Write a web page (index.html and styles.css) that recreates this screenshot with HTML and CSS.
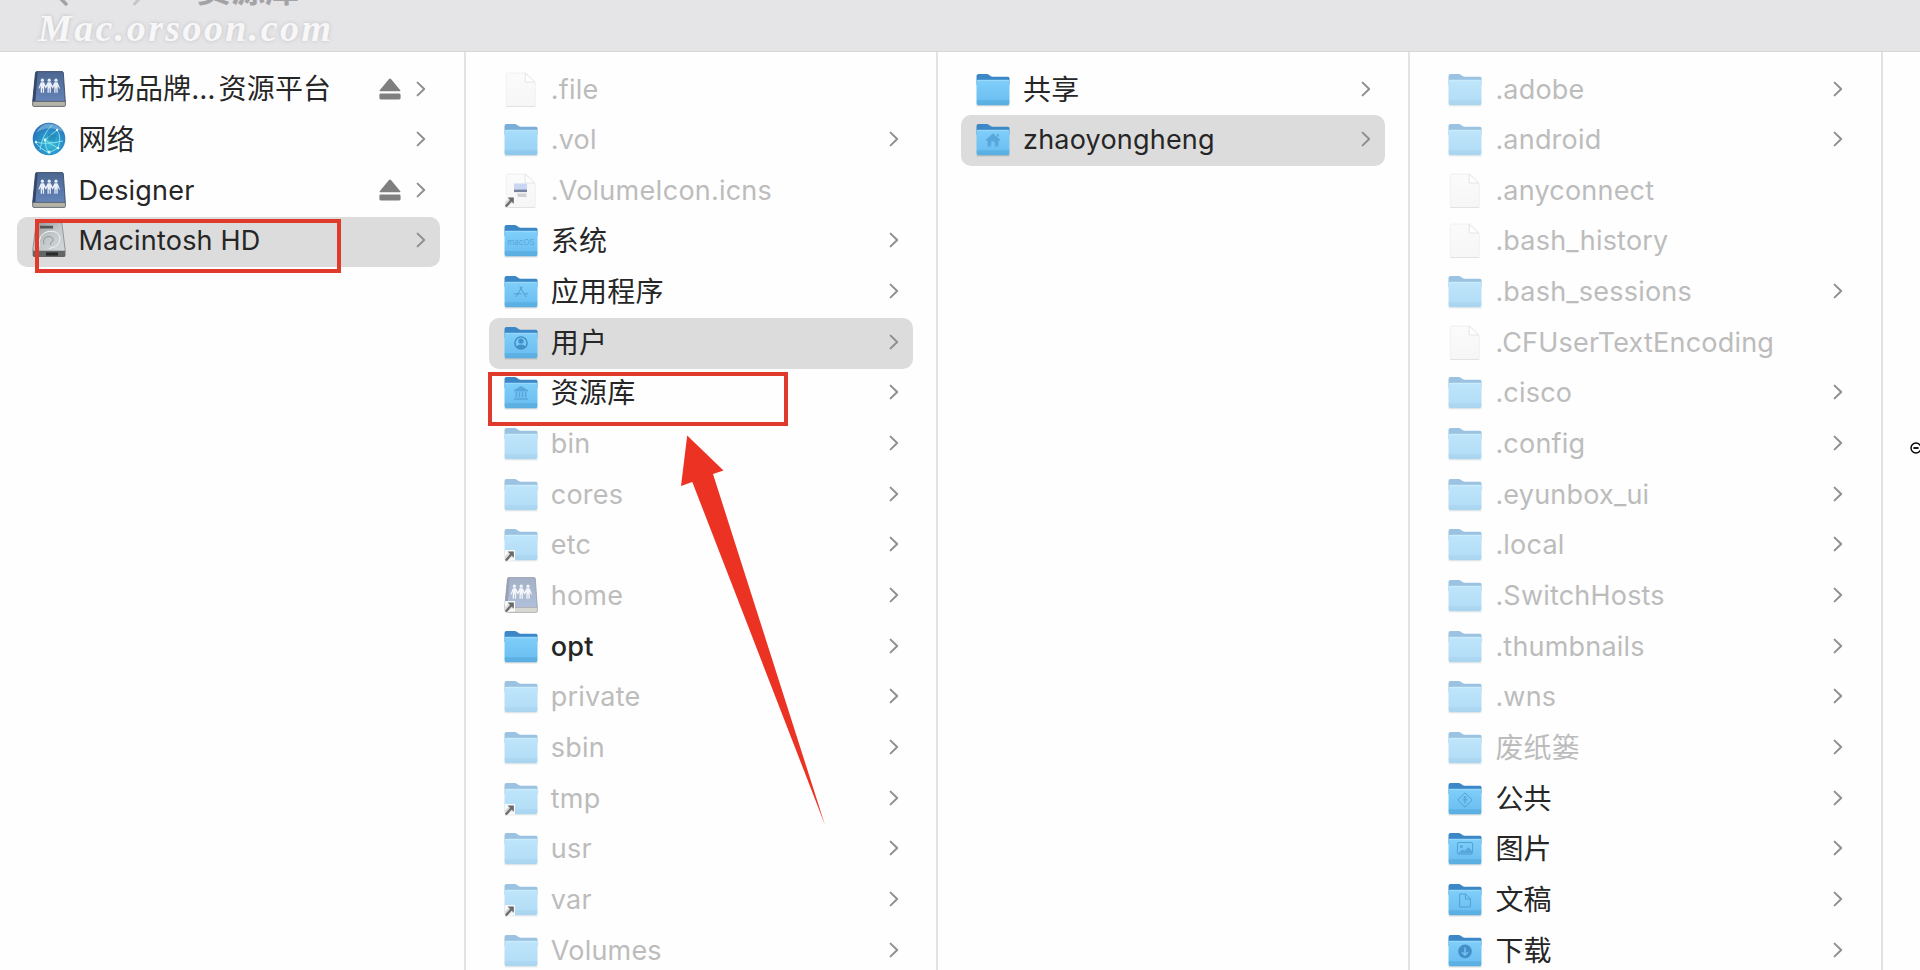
FILE: index.html
```html
<!DOCTYPE html>
<html lang="zh-CN">
<head>
    <meta charset="UTF-8">
    <title>Macintosh HD</title>
    <link rel="stylesheet" href="styles.css">
</head>
<body>
    <!-- Icon definitions -->
    <svg class="sprite" aria-hidden="true">
        <defs>
            <linearGradient id="folderFront" x1="0" y1="0" x2="0" y2="1">
                <stop offset="0" stop-color="#80cffa"/>
                <stop offset="0.78" stop-color="#6dc0f2"/>
                <stop offset="0.82" stop-color="#5db2e6"/>
                <stop offset="1" stop-color="#5aaddf"/>
            </linearGradient>
            <linearGradient id="serverFront" x1="0" y1="0" x2="0" y2="1">
                <stop offset="0" stop-color="#4c6690"/>
                <stop offset="1" stop-color="#6484b8"/>
            </linearGradient>
            <radialGradient id="globeFill" cx="0.55" cy="0.65" r="0.65">
                <stop offset="0" stop-color="#3cc0d8"/>
                <stop offset="0.5" stop-color="#2a95cc"/>
                <stop offset="1" stop-color="#2b6cb5"/>
            </radialGradient>
            <linearGradient id="diskFill" x1="0" y1="0" x2="1" y2="1">
                <stop offset="0" stop-color="#8f9494"/>
                <stop offset="0.5" stop-color="#c3c9cb"/>
                <stop offset="1" stop-color="#d3d8da"/>
            </linearGradient>
            <linearGradient id="pageFill" x1="0" y1="0" x2="0" y2="1">
                <stop offset="0" stop-color="#fbfbfb"/>
                <stop offset="1" stop-color="#f6f6f6"/>
            </linearGradient>
        </defs>
        <symbol id="folder" viewBox="0 0 34 36">
            <path d="M0.5 34.6h33" stroke="#000" stroke-opacity="0.13" stroke-width="2"/>
            <path d="M0.5 5a2 2 0 0 1 2-2H11c2 0 3 2.7 5.5 2.7H32A1.5 1.5 0 0 1 33.5 7.2V14H0.5z" fill="#3c88c6"/>
            <path d="M0.5 10.3a1.6 1.6 0 0 1 1.6-1.6h29.8a1.6 1.6 0 0 1 1.6 1.6V32.2a2 2 0 0 1-2 2h-29a2 2 0 0 1-2-2z" fill="url(#folderFront)"/>
            <path d="M1.2 9.6h31.6" stroke="#9bdafb" stroke-width="1"/>
        </symbol>
        <symbol id="file" viewBox="0 0 34 36">
            <path d="M2.4 3a1 1 0 0 1 1-1H21.5L31.3 11.5V34.5a1 1 0 0 1-1 1H3.4a1 1 0 0 1-1-1z" fill="url(#pageFill)" stroke="#efefef" stroke-width="0.8"/>
            <path d="M2.5 35.6h28.7" stroke="#dedede" stroke-width="0.9"/>
            <path d="M21.2 2.2V11h9.8z" fill="#fff" stroke="#e2e2e2" stroke-width="0.9"/>
        </symbol>
        <symbol id="server" viewBox="0 0 34 36">
            <path d="M3.5 1.6A1.2 1.2 0 0 1 4.7 0.6H30a1.3 1.3 0 0 1 1.3 1.1L33.3 30.6H0.7z" fill="url(#serverFront)" stroke="#38496a" stroke-width="0.9"/>
            <path d="M3.6 1.4L5.6 1L3.4 30H0.7z" fill="#34466a"/>
            <path d="M0.7 30.4h32.7v4a1 1 0 0 1-1 1H1.7a1 1 0 0 1-1-1z" fill="#b4b4a8" stroke="#5c626c" stroke-width="0.9"/>
            <g fill="#e9eef8">
                <circle cx="10.4" cy="9.2" r="1.6"/>
                <circle cx="17.2" cy="9.2" r="1.6"/>
                <circle cx="24" cy="9.2" r="1.6"/>
                <path d="M8.8 11.2h3.2L13.8 15 15.6 11.2h3.2L20.6 15 22.4 11.2h3.2L28 17.3 27.2 17.8 25.7 15V21.8H24.4V17.6H23.6V21.8H22.3V15L20.6 17.8 18.9 15V21.8H17.6V17.6H16.8V21.8H15.5V15L13.8 17.8 12.1 15V21.8H10.8V17.6H10V21.8H8.7V15L7.2 17.8 6.4 17.3z"/>
            </g>
        </symbol>
        <symbol id="globe" viewBox="0 0 34 36">
            <circle cx="17" cy="18" r="16.3" fill="url(#globeFill)"/>
            <path d="M4 12Q9 2 18 2.4Q27 3 31 11Q16 3 4 12z" fill="#c2eefa" opacity="0.4"/>
            <path d="M3 21Q14 24 31 20M8 29Q10 14 20 4M13 19L25 9M13 19Q20 24 26 27M25 9Q30 16 26 27M13 19Q13 27 17 32M26 27L17 32M3 21Q8 28 17 32" fill="none" stroke="#9af0f0" stroke-width="1" opacity="0.8"/>
            <path d="M16 13L24 14L23 21L16 19z" fill="#145d8d" opacity="0.3"/>
            <g fill="#d8fdff">
                <circle cx="13" cy="19" r="1.4"/>
                <circle cx="25" cy="9" r="1.2"/>
                <circle cx="17" cy="31" r="1.5"/>
                <circle cx="26" cy="27" r="1.3"/>
                <circle cx="4" cy="21" r="1.2"/>
            </g>
        </symbol>
        <symbol id="disk" viewBox="0 0 34 36">
            <path d="M4 2a1.5 1.5 0 0 1 1.5-1.4h23A1.5 1.5 0 0 1 30 2L33.3 29H0.7z" fill="url(#diskFill)" stroke="#818687" stroke-width="0.8"/>
            <path d="M8 3.8h13v2.6H7.8z" fill="#555"/>
            <path d="M7 25Q6 12 16 9.5Q27 8 28 16Q28 25 17 26.5" fill="none" stroke="#eff3f4" stroke-width="1"/>
            <path d="M12 22.5Q10 15 17 14.5Q22 15 21 19Q18 20 18.5 23" fill="none" stroke="#92999b" stroke-width="1"/>
            <path d="M0.7 29h32.7v4.6a1.4 1.4 0 0 1-1.4 1.4H2.1a1.4 1.4 0 0 1-1.4-1.4z" fill="#626566"/>
            <path d="M14 30.4h12v3.2H14z" fill="#2a2a2a"/>
        </symbol>
        <symbol id="alias" viewBox="0 0 34 36">
            <path d="M1.2 24H11V34.6H6L0 37z" fill="#fafafa"/>
            <path d="M1 35.6L1 30.5L6 25.4H9.8V32.6L8 31L2.6 35.4z" fill="#b9b9b9" opacity="0.5"/>
            <path d="M1.8 34.4L7.6 28" fill="none" stroke="#6a6a6a" stroke-width="2.2"/>
            <path d="M3.6 25.4H9.8V31.8z" fill="#6a6a6a"/>
        </symbol>
        <symbol id="chevron" viewBox="0 0 10 16">
            <path d="M1.6 1.6L8.2 8L1.6 14.4" fill="none" stroke="#8f8f8f" stroke-width="2" stroke-linecap="round" stroke-linejoin="round"/>
        </symbol>
        <symbol id="eject" viewBox="0 0 22 22">
            <path d="M10 1.1a1.3 1.3 0 0 1 2 0L21.3 12.2a0.6 0.6 0 0 1-0.5 1H1.2a0.6 0.6 0 0 1-0.5-1z" fill="#7f7f7f"/>
            <rect x="0.4" y="15.6" width="21.2" height="5.8" rx="1.3" fill="#7f7f7f"/>
        </symbol>
    </svg>

    <header class="toolbar">
        <svg class="toolbar-arrows" viewBox="0 0 94 8">
            <path d="M8 -4L16 4" stroke="#a2a2a5" stroke-width="3.4" stroke-linecap="round"/>
            <path d="M92 -4L84.5 4" stroke="#c6c6c9" stroke-width="3" stroke-linecap="round"/>
        </svg>
        <div class="toolbar-title">资源库</div>
        <div class="watermark">Mac.orsoon.com</div>
    </header>

    <main class="columns">
        <ul class="column">
            <li class="row zh"><svg class="icon"><use href="#server"/></svg><span class="name">市场品牌<span class="dots">…</span>资源平台</span><svg class="eject"><use href="#eject"/></svg><svg class="chevron"><use href="#chevron"/></svg></li>
            <li class="row zh"><svg class="icon"><use href="#globe"/></svg><span class="name">网络</span><svg class="chevron"><use href="#chevron"/></svg></li>
            <li class="row"><svg class="icon"><use href="#server"/></svg><span class="name">Designer</span><svg class="eject"><use href="#eject"/></svg><svg class="chevron"><use href="#chevron"/></svg></li>
            <li class="row selected"><svg class="icon"><use href="#disk"/></svg><span class="name">Macintosh HD</span><svg class="chevron"><use href="#chevron"/></svg></li>
        </ul>

        <ul class="column">
            <li class="row hidden-item"><svg class="icon page"><use href="#file"/></svg><span class="name">.file</span></li>
            <li class="row hidden-item"><svg class="icon strong"><use href="#folder"/></svg><span class="name">.vol</span><svg class="chevron"><use href="#chevron"/></svg></li>
            <li class="row hidden-item">
                <svg class="icon page" viewBox="0 0 34 36">
                    <use href="#file"/>
                    <path d="M10 11.5h13v6H10z" fill="#c9d7f5"/>
                    <path d="M10 17.5h13v2.6H10z" fill="#7483a0"/>
                    <path d="M13 21.5h9.5v3.5H14z" fill="#d0d0d3"/>
                    <use href="#alias"/>
                </svg>
                <span class="name">.VolumeIcon.icns</span>
            </li>
            <li class="row zh">
                <svg class="icon" viewBox="0 0 34 36"><use href="#folder"/><text class="folder-text" x="17" y="23">macOS</text></svg>
                <span class="name">系统</span><svg class="chevron"><use href="#chevron"/></svg>
            </li>
            <li class="row zh">
                <svg class="icon" viewBox="0 0 34 36"><use href="#folder"/><path class="glyph" d="M18.2 13.5L12 24M15.8 13.5L22 24M10 20.8h7.5M20.5 20.8h3.5"/></svg>
                <span class="name">应用程序</span><svg class="chevron"><use href="#chevron"/></svg>
            </li>
            <li class="row zh selected">
                <svg class="icon" viewBox="0 0 34 36"><use href="#folder"/><circle class="glyph bold" cx="17" cy="19" r="6.1"/><circle class="glyph-fill dark" cx="17" cy="17" r="2.6"/><path class="glyph-fill dark" d="M12.3 22.8Q17 18 21.7 22.8Q17 27.5 12.3 22.8z"/></svg>
                <span class="name">用户</span><svg class="chevron"><use href="#chevron"/></svg>
            </li>
            <li class="row zh">
                <svg class="icon" viewBox="0 0 34 36"><use href="#folder"/><path class="glyph-fill" d="M17 12L24 16.2V17.4H10V16.2zM10 24.2h14v1.6H10zM11.6 18h1.6v5.6h-1.6zM14.7 18h1.6v5.6h-1.6zM17.8 18h1.6v5.6h-1.6zM20.9 18h1.6v5.6h-1.6z"/></svg>
                <span class="name">资源库</span><svg class="chevron"><use href="#chevron"/></svg>
            </li>
            <li class="row hidden-item"><svg class="icon"><use href="#folder"/></svg><span class="name">bin</span><svg class="chevron"><use href="#chevron"/></svg></li>
            <li class="row hidden-item"><svg class="icon"><use href="#folder"/></svg><span class="name">cores</span><svg class="chevron"><use href="#chevron"/></svg></li>
            <li class="row hidden-item"><svg class="icon linked" viewBox="0 0 34 36"><use class="base" href="#folder"/><use href="#alias"/></svg><span class="name">etc</span><svg class="chevron"><use href="#chevron"/></svg></li>
            <li class="row hidden-item"><svg class="icon linked" viewBox="0 0 34 36"><use class="base" href="#server"/><use href="#alias"/></svg><span class="name">home</span><svg class="chevron"><use href="#chevron"/></svg></li>
            <li class="row"><svg class="icon"><use href="#folder"/></svg><span class="name medium">opt</span><svg class="chevron"><use href="#chevron"/></svg></li>
            <li class="row hidden-item"><svg class="icon"><use href="#folder"/></svg><span class="name">private</span><svg class="chevron"><use href="#chevron"/></svg></li>
            <li class="row hidden-item"><svg class="icon"><use href="#folder"/></svg><span class="name">sbin</span><svg class="chevron"><use href="#chevron"/></svg></li>
            <li class="row hidden-item"><svg class="icon linked" viewBox="0 0 34 36"><use class="base" href="#folder"/><use href="#alias"/></svg><span class="name">tmp</span><svg class="chevron"><use href="#chevron"/></svg></li>
            <li class="row hidden-item"><svg class="icon"><use href="#folder"/></svg><span class="name">usr</span><svg class="chevron"><use href="#chevron"/></svg></li>
            <li class="row hidden-item"><svg class="icon linked" viewBox="0 0 34 36"><use class="base" href="#folder"/><use href="#alias"/></svg><span class="name">var</span><svg class="chevron"><use href="#chevron"/></svg></li>
            <li class="row hidden-item"><svg class="icon"><use href="#folder"/></svg><span class="name">Volumes</span><svg class="chevron"><use href="#chevron"/></svg></li>
        </ul>

        <ul class="column">
            <li class="row zh"><svg class="icon"><use href="#folder"/></svg><span class="name">共享</span><svg class="chevron"><use href="#chevron"/></svg></li>
            <li class="row selected">
                <svg class="icon" viewBox="0 0 34 36"><use href="#folder"/><path class="glyph-fill" fill-rule="evenodd" d="M17 12.2L24.5 19L23.4 20L22.4 19.2V25.6H11.6V19.2L10.6 20L9.5 19zM15.2 20.4V25.6H18.8V20.4zM21 13h1.8v3L21 14.4z"/></svg>
                <span class="name">zhaoyongheng</span><svg class="chevron"><use href="#chevron"/></svg>
            </li>
        </ul>

        <ul class="column">
            <li class="row hidden-item"><svg class="icon"><use href="#folder"/></svg><span class="name">.adobe</span><svg class="chevron"><use href="#chevron"/></svg></li>
            <li class="row hidden-item"><svg class="icon"><use href="#folder"/></svg><span class="name">.android</span><svg class="chevron"><use href="#chevron"/></svg></li>
            <li class="row hidden-item"><svg class="icon page"><use href="#file"/></svg><span class="name">.anyconnect</span></li>
            <li class="row hidden-item"><svg class="icon page"><use href="#file"/></svg><span class="name">.bash_history</span></li>
            <li class="row hidden-item"><svg class="icon"><use href="#folder"/></svg><span class="name">.bash_sessions</span><svg class="chevron"><use href="#chevron"/></svg></li>
            <li class="row hidden-item"><svg class="icon page"><use href="#file"/></svg><span class="name">.CFUserTextEncoding</span></li>
            <li class="row hidden-item"><svg class="icon"><use href="#folder"/></svg><span class="name">.cisco</span><svg class="chevron"><use href="#chevron"/></svg></li>
            <li class="row hidden-item"><svg class="icon"><use href="#folder"/></svg><span class="name">.config</span><svg class="chevron"><use href="#chevron"/></svg></li>
            <li class="row hidden-item"><svg class="icon"><use href="#folder"/></svg><span class="name">.eyunbox_ui</span><svg class="chevron"><use href="#chevron"/></svg></li>
            <li class="row hidden-item"><svg class="icon"><use href="#folder"/></svg><span class="name">.local</span><svg class="chevron"><use href="#chevron"/></svg></li>
            <li class="row hidden-item"><svg class="icon"><use href="#folder"/></svg><span class="name">.SwitchHosts</span><svg class="chevron"><use href="#chevron"/></svg></li>
            <li class="row hidden-item"><svg class="icon"><use href="#folder"/></svg><span class="name">.thumbnails</span><svg class="chevron"><use href="#chevron"/></svg></li>
            <li class="row hidden-item"><svg class="icon"><use href="#folder"/></svg><span class="name">.wns</span><svg class="chevron"><use href="#chevron"/></svg></li>
            <li class="row zh hidden-item"><svg class="icon"><use href="#folder"/></svg><span class="name">废纸篓</span><svg class="chevron"><use href="#chevron"/></svg></li>
            <li class="row zh">
                <svg class="icon" viewBox="0 0 34 36"><use href="#folder"/><path class="glyph" d="M17 12.8L24.2 20L17 27.2L9.8 20zM17 16.4V23.5M14.6 19.8H19.4M15.4 18L17 16.4L18.6 18"/></svg>
                <span class="name">公共</span><svg class="chevron"><use href="#chevron"/></svg>
            </li>
            <li class="row zh">
                <svg class="icon" viewBox="0 0 34 36"><use href="#folder"/><rect class="glyph" x="9.4" y="12.5" width="15.2" height="11.6" rx="1.5"/><circle class="glyph-fill" cx="13.4" cy="16.4" r="1.5"/><path class="glyph-fill" d="M10 23.6L14.5 19.5L16.5 21L20.5 17.3L24 21V23.6z"/></svg>
                <span class="name">图片</span><svg class="chevron"><use href="#chevron"/></svg>
            </li>
            <li class="row zh">
                <svg class="icon" viewBox="0 0 34 36"><use href="#folder"/><path class="glyph" d="M11.6 13H17.6L22.4 17.8V26H11.6zM17.4 13V18H22.4"/></svg>
                <span class="name">文稿</span><svg class="chevron"><use href="#chevron"/></svg>
            </li>
            <li class="row zh">
                <svg class="icon" viewBox="0 0 34 36"><use href="#folder"/><circle class="glyph-fill dark" cx="17" cy="19.4" r="6.8"/><path d="M17 15.4V22.8M14 20.2L17 23L20 20.2" fill="none" stroke="#74c4f5" stroke-width="1.5"/></svg>
                <span class="name">下载</span><svg class="chevron"><use href="#chevron"/></svg>
            </li>
        </ul>
    </main>

    <!-- Annotations over the file list -->
    <div class="mark mark-disk"></div>
    <div class="mark mark-library"></div>
    <svg class="arrow" viewBox="0 0 150 395">
        <path d="M8.2 5.5L44.5 40.5L34 44L146 395L13.3 52L2 56z" fill="#ec3323"/>
    </svg>
    <svg class="cursor" viewBox="0 0 10 14">
        <circle cx="6" cy="7" r="5" fill="#fff" stroke="#000" stroke-width="1.4"/>
        <path d="M3.4 7h5.2" stroke="#000" stroke-width="1.8"/>
    </svg>
</body>
</html>
```

FILE: styles.css
```css
* {
    box-sizing: border-box;
}

body {
    position: relative;
    display: flex;
    flex-direction: column;
    height: 970px;
    margin: 0;
    overflow: hidden;
    background-color: #fefefe;
    color: #262626;
    font-family: Inter, "Noto Sans CJK SC", sans-serif;
}

.sprite {
    position: absolute;
    width: 0;
    height: 0;
}

/* Toolbar */
.toolbar {
    position: relative;
    display: flex;
    flex-shrink: 0;
    height: 52px;
    padding-left: 50px;
    overflow: hidden;
    background-color: #e5e4e7;
    border-bottom: 1px solid #d6d6d7;
}

.toolbar-arrows {
    width: 94px;
    height: 8px;
}

/* Only the lower edge of the title is in view */
.toolbar-title {
    margin-top: -28px;
    margin-left: 53px;
    color: #a3a3a6;
    font-size: 34px;
    font-weight: bold;
    line-height: 36px;
}

.watermark {
    position: absolute;
    left: 38px;
    top: 6px;
    color: #f7f7f8;
    font-family: "Liberation Serif", serif;
    font-size: 38px;
    font-style: italic;
    font-weight: bold;
    letter-spacing: 2.4px;
    line-height: 44px;
    text-shadow: 0 0 4px #c0c0c4;
}

/* Columns */
.columns {
    display: flex;
    flex: 1;
    min-height: 0;
    margin-left: -6.5px;
}

.column {
    flex: 0 0 472.3px;
    height: 918px;
    margin: 0;
    padding: 12.7px 23.6px 0 23px;
    overflow: hidden;
    border-right: 2px solid #e2e2e2;
    list-style: none;
}

.row {
    display: flex;
    align-items: center;
    height: 50.66px;
    padding: 0 14px 3px 15px;
    border-radius: 10px;
}

.selected {
    background-color: #dcdcdc;
}

.icon {
    flex-shrink: 0;
    width: 34px;
    height: 36px;
    margin-right: 13px;
}

.name {
    flex: 1;
    padding-top: 2px;
    font-size: 27px;
    letter-spacing: 0.2px;
    line-height: 40px;
    white-space: nowrap;
}

.zh .name {
    padding-top: 0;
    padding-bottom: 2px;
    font-family: "Noto Sans CJK SC", sans-serif;
    font-size: 28px;
}

.medium {
    font-weight: 500;
}

.dots {
    font-family: Inter, sans-serif;
    letter-spacing: 3px;
}

.eject {
    width: 22px;
    height: 22px;
    margin-right: 15px;
}

.chevron {
    width: 10px;
    height: 16px;
}

/* Hidden files are dimmed */
.hidden-item .name {
    color: #bcbcbc;
}

.hidden-item .icon,
.hidden-item .linked .base {
    opacity: 0.5;
}

.hidden-item .strong {
    opacity: 0.68;
}

.hidden-item .page,
.hidden-item .linked {
    opacity: 1;
}

/* Marks on the folder icons */
.glyph {
    fill: none;
    stroke: #529fd4;
    stroke-width: 1;
}

.glyph-fill {
    fill: #57a6dc;
}

.bold {
    stroke: #3f8cc4;
    stroke-width: 1.4;
}

.dark {
    fill: #438fc8;
}

.folder-text {
    fill: #57a6dc;
    font-size: 8px;
    text-anchor: middle;
}

/* Annotations */
.mark {
    position: absolute;
    height: 54px;
    border: 4px solid #e03a2c;
}

.mark-disk {
    left: 35px;
    top: 219px;
    width: 306px;
}

.mark-library {
    left: 488px;
    top: 371.5px;
    width: 300px;
}

.arrow {
    position: absolute;
    left: 679px;
    top: 430px;
    width: 150px;
    height: 395px;
}

.cursor {
    position: absolute;
    left: 1910px;
    top: 441px;
    width: 10px;
    height: 14px;
}
```
